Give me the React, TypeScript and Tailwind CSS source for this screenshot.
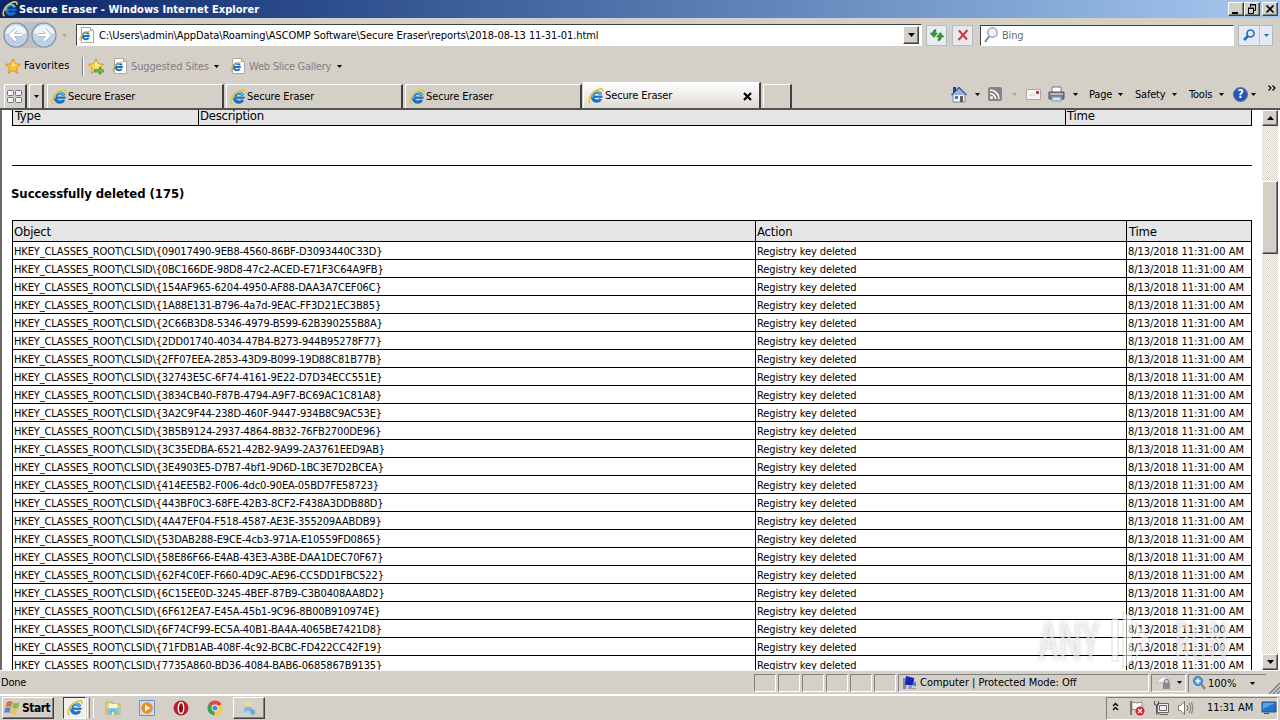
import type { ReactNode } from "react";

const deletedKeys = [
    "09017490-9EB8-4560-86BF-D3093440C33D",
    "0BC166DE-98D8-47c2-ACED-E71F3C64A9FB",
    "154AF965-6204-4950-AF88-DAA3A7CEF06C",
    "1A88E131-B796-4a7d-9EAC-FF3D21EC3B85",
    "2C66B3D8-5346-4979-B599-62B390255B8A",
    "2DD01740-4034-47B4-B273-944B95278F77",
    "2FF07EEA-2853-43D9-B099-19D88C81B77B",
    "32743E5C-6F74-4161-9E22-D7D34ECC551E",
    "3834CB40-F87B-4794-A9F7-BC69AC1C81A8",
    "3A2C9F44-238D-460F-9447-934B8C9AC53E",
    "3B5B9124-2937-4864-8B32-76FB2700DE96",
    "3C35EDBA-6521-42B2-9A99-2A3761EED9AB",
    "3E4903E5-D7B7-4bf1-9D6D-1BC3E7D2BCEA",
    "414EE5B2-F006-4dc0-90EA-05BD7FE58723",
    "443BF0C3-68FE-42B3-8CF2-F438A3DDB88D",
    "4A47EF04-F518-4587-AE3E-355209AABDB9",
    "53DAB288-E9CE-4cb3-971A-E10559FD0865",
    "58E86F66-E4AB-43E3-A3BE-DAA1DEC70F67",
    "62F4C0EF-F660-4D9C-AE96-CC5DD1FBC522",
    "6C15EE0D-3245-4BEF-87B9-C3B0408AA8D2",
    "6F612EA7-E45A-45b1-9C96-8B00B910974E",
    "6F74CF99-EC5A-40B1-BA4A-4065BE7421D8",
    "71FDB1AB-408F-4c92-BCBC-FD422CC42F19",
    "7735A860-BD36-4084-BAB6-0685867B9135",
];

const raised = "border border-t-white border-l-white border-r-[#404040] border-b-[#404040] bg-[#d4d0c8] shadow-[inset_-1px_-1px_0_#808080]";

function IeIcon() {
    return (
        <svg width="16" height="16" viewBox="0 0 16 16" className="shrink-0">
            <path d="M13 6.500A4.600 4.600 0 1 0 12.800 11" fill="none" stroke="#1b72c4" strokeWidth="3.200" />
            <path d="M5 8.700h9.600" stroke="#1b72c4" strokeWidth="2.200" />
            <path d="M12.600 6.200A4.400 4.400 0 0 0 4.400 9.500" fill="none" stroke="#5cc6f7" strokeWidth="1.800" />
            <path d="M2.800 15C-1 14 2 5.500 8.500 2.200 12 .3 15.800 0 14.700 3.800" fill="none" stroke="#edc334" strokeWidth="1.700" />
        </svg>
    );
}

function PageIcon() {
    return (
        <svg width="16" height="16" viewBox="0 0 16 16" className="shrink-0">
            <path d="M2.500.5h9l3 3v12h-12z" fill="#fff" stroke="#a9a9a9" />
            <path d="M11.500.5v3h3" fill="#e2e2e2" stroke="#a9a9a9" />
            <path d="M9.800 7.300A3.300 3.300 0 1 0 9.600 10.800M3.800 9h7" fill="none" stroke="#1b72c4" strokeWidth="2" />
            <path d="M1.500 13.500C-.5 11 4 5.500 11 4" fill="none" stroke="#dfb52f" strokeWidth="1.200" />
        </svg>
    );
}

function Caret({ color = "#000" }: { color?: string }) {
    return (
        <svg width="5" height="3" viewBox="0 0 5 3" className="shrink-0">
            <path d="M0 0h5L2.500 3z" fill={color} />
        </svg>
    );
}

function Star({ small = false }: { small?: boolean }) {
    return (
        <svg width="17" height="17" viewBox="0 0 17 17" className="shrink-0">
            <path d="M8 .8l2.200 5 5.300.500-4 3.700 1.200 5.300L8 12.500l-4.700 2.800 1.200-5.300-4-3.700 5.300-.5z" fill={small ? "#f8dc61" : "#fbc02c"} stroke="#d68f1c" strokeWidth=".9" />
            <path d="M8 3l1.300 3.600 3 .3-5.300 2z" fill="#fff1a0" />
            {small && <path d="M6.500 11.500h5V9l4.700 3.800-4.700 3.700V14h-5z" fill="#63c44c" stroke="#2c8a2c" strokeWidth=".7" />}
        </svg>
    );
}

function ArrowButton({ back = false }: { back?: boolean }) {
    const arrow = back ? "M19 13H8M13 7.500L7.500 13l5.500 5.500" : "M7 13h11M13 7.500l5.500 5.500-5.500 5.500";
    return (
        <svg width="26" height="26" viewBox="0 0 26 26" className="shrink-0">
            <circle cx="13" cy="13" r="12" fill="#c7d3e2" stroke="#8190a3" strokeWidth="1.200" />
            <path d="M2.500 11a10.700 9.500 0 0 1 21 0q-10 4-21 0z" fill="#f1f4f9" />
            <path d="M4 18a10 7 0 0 0 18 0q-9-4-18 0z" fill="#b5d2ea" />
            <path d={arrow} fill="none" stroke="#9eacbd" strokeWidth="4" />
            <path d={arrow} fill="none" stroke="#fff" strokeWidth="2.700" />
        </svg>
    );
}

function TitleBar() {
    return (
        <div className="flex h-[18px] items-center bg-linear-to-r from-[#0a246a] to-[#a6caf0] px-[2px]">
            <IeIcon />
            <span className="ml-px pt-px text-[11px] font-bold tracking-[0.05px] text-white">Secure Eraser - Windows Internet Explorer</span>
            <div className="ml-auto flex h-[14px]">
                <div className={`w-4 ${raised}`}>
                    <svg width="14" height="12"><path d="M3 9h6v2H3z" /></svg>
                </div>
                <div className={`w-4 ${raised}`}>
                    <svg width="14" height="12" fill="none" stroke="#000">
                        <path d="M5 2h6M5.500 2v2M10.500 2v5.500H9M3 5h6M3.500 5v5.500h5V5" />
                        <path d="M5 1.500h6M3 5.500h6" />
                    </svg>
                </div>
                <div className={`ml-[2px] w-4 ${raised}`}>
                    <svg width="14" height="12"><path d="M3.500 2.500l7 7M10.500 2.500l-7 7" stroke="#000" strokeWidth="1.700" /></svg>
                </div>
            </div>
        </div>
    );
}

function AddressBar() {
    return (
        <div className="flex h-[34px] items-center pl-[3px]">
            <div className="flex w-[53px] rounded-full bg-[#bdc0c6]">
                <ArrowButton back />
                <div className="ml-[2px]"><ArrowButton /></div>
            </div>
            <div className="ml-[6px]"><Caret color="#a9a59e" /></div>
            <div className="ml-[9px] flex h-[22px] w-[846px] items-center border border-t-[#404040] border-r-white border-b-white border-l-[#404040] bg-white pl-[2px]">
                <PageIcon />
                <span className="ml-1 pt-[2px] text-[11px] tracking-[-0.075px]">C:\Users\admin\AppData\Roaming\ASCOMP Software\Secure Eraser\reports\2018-08-13 11-31-01.html</span>
                <div className={`ml-auto mr-[2px] flex h-[18px] w-4 items-center justify-center ${raised}`}>
                    <svg width="7" height="4"><path d="M0 0h7L3.500 4z" /></svg>
                </div>
            </div>
            <div className="ml-[4px] flex h-[21px] w-[21px] items-center justify-center border border-[#b3bcc4] bg-[#e6edee]">
                <svg width="16" height="16" viewBox="0 0 16 16">
                    <path d="M7 2.500Q4 2.500 3.500 6H1l3.800 4.500L8.500 6H6q0-1 1-1.500zM9 14q3.500-.5 3.500-4H15l-3.700-4.500L7.500 10H10q0 1.500-1 2z" fill="#36983a" stroke="#207527" strokeWidth=".5" />
                </svg>
            </div>
            <div className="ml-[5px] flex h-[21px] w-[21px] items-center justify-center border border-[#b3bcc4] bg-[#ebe8ec]">
                <svg width="14" height="14"><path d="M3 2.500l8 9M11.500 2L2.500 12" stroke="#cb3740" strokeWidth="2" /></svg>
            </div>
            <div className="ml-[7px] flex h-[21px] w-[254px] items-center border border-t-[#404040] border-r-white border-b-white border-l-[#404040] bg-white pl-[2px]">
                <svg width="17" height="18" viewBox="0 0 17 18" fill="none">
                    <path d="M6.500 10L2 16" stroke="#7e8894" strokeWidth="2" />
                    <circle cx="9.500" cy="6.500" r="4.700" fill="#eaf3fa" stroke="#9eabba" strokeWidth="1.500" />
                </svg>
                <span className="ml-[2px] pt-[2px] text-[11px] tracking-[-0.2px] text-[#6d6d6d]">Bing</span>
            </div>
            <div className="ml-[4px] flex h-[21px] w-[35px] border border-[#aeb9c8] bg-[#e5e9f1]">
                <div className="flex w-[21px] items-center justify-center border-r border-[#b8c2d0]">
                    <svg width="14" height="14" fill="none" stroke="#286bc2"><path d="M6 8L2 12" strokeWidth="2.500" /><circle cx="8.500" cy="5.500" r="3.500" strokeWidth="1.700" /></svg>
                </div>
                <div className="flex flex-1 items-center justify-center"><Caret color="#286bc2" /></div>
            </div>
        </div>
    );
}

function FavoritesBar() {
    return (
        <div className="flex h-[28px] items-center pl-[5px] text-[11px]">
            <Star />
            <span className="ml-[2px] w-[46px] tracking-[0.1px]">Favorites</span>
            <div className="ml-[12px] h-[19px] w-px bg-[#808080]" />
            <div className="h-[19px] w-px bg-white" />
            <div className="ml-[4px]"><Star small /></div>
            <div className="ml-[7px]"><PageIcon /></div>
            <span className="ml-[3px] w-[77px] pt-[2px] tracking-[-0.15px] text-[#808080]">Suggested Sites</span>
            <div className="ml-[6px]"><Caret /></div>
            <div className="ml-[11px]"><PageIcon /></div>
            <span className="ml-[3px] w-[82px] pt-[2px] tracking-[-0.25px] text-[#808080]">Web Slice Gallery</span>
            <div className="ml-[6px]"><Caret /></div>
        </div>
    );
}

function Tab() {
    return (
        <div className="flex h-[24px] w-[177px] items-center border-t border-r-2 border-l border-t-white border-r-[#404040] border-l-white pl-[3px]">
            <IeIcon />
            <span className="ml-px pt-px text-[11px] tracking-[-0.12px]">Secure Eraser</span>
        </div>
    );
}

function MenuButton({ children, width }: { children: ReactNode; width: string }) {
    return (
        <div className={`flex items-center justify-between ${width}`}>
            <span className="pt-px">{children}</span>
            <Caret />
        </div>
    );
}

function TabBar() {
    return (
        <div className="flex h-[30px] items-end border-b-2 border-[#55534f] pl-1">
            <div className="flex h-[24px] w-[23px] items-center justify-center border-t border-r-2 border-l border-t-white border-r-[#404040] border-l-white">
                <svg width="16" height="14" fill="#eef3f8" stroke="#68738a"><rect x=".5" y=".5" width="6" height="5" rx="1" /><rect x="8.500" y=".5" width="6" height="5" rx="1" /><rect x=".5" y="7.500" width="6" height="5" rx="1" /><rect x="8.500" y="7.500" width="6" height="5" rx="1" /></svg>
            </div>
            <div className="ml-[2px] flex h-[24px] w-[15px] items-center justify-center border-t border-r-2 border-l border-t-white border-r-[#404040] border-l-white"><Caret /></div>
            <div className="ml-[3px] flex gap-[2px]">
                <Tab />
                <Tab />
                <Tab />
            </div>
            <div className="ml-px flex h-[26px] w-[178px] items-center border-t border-r-2 border-l border-t-white border-r-[#404040] border-l-white bg-linear-to-b from-white to-[#dedad4] pl-[4px]">
                <IeIcon />
                <span className="ml-px pt-px text-[11px] tracking-[-0.12px]">Secure Eraser</span>
                <svg width="9" height="9" className="mt-[2px] mr-[7px] ml-auto"><path d="M1 1l7 7M8 1L1 8" stroke="#000" strokeWidth="2.200" /></svg>
            </div>
            <div className="ml-[2px] h-[24px] w-[29px] border-t border-r-2 border-l border-t-white border-r-[#404040] border-l-white" />
            <div className="ml-[159px] flex h-[28px] w-[329px] items-center text-[11px] tracking-[-0.2px]">
                <svg width="16" height="17" viewBox="0 0 16 17">
                    <path d="M2 8h12v8H2z" fill="#eef1f6" stroke="#7c8baa" />
                    <path d="M.5 9L8 1.500 15.500 9" fill="#98b5d8" stroke="#41619c" strokeWidth="1.500" />
                    <path d="M2 1h3v4L2 7z" fill="#243b9d" />
                    <path d="M9 10h3v6H9z" fill="#695b56" /><path d="M4 10h3v3H4z" fill="#3d7dc3" />
                </svg>
                <div className="ml-[8px]"><Caret /></div>
                <svg width="14" height="14" viewBox="0 0 14 14" className="ml-[8px]">
                    <rect width="14" height="14" rx="2" fill="#858585" />
                    <circle cx="3.500" cy="10.500" r="1.500" fill="#fff" />
                    <path d="M2 6.500a5.500 5.500 0 0 1 5.500 5.500M2 3a9 9 0 0 1 9 9" fill="none" stroke="#fff" strokeWidth="1.500" />
                </svg>
                <div className="ml-[10px]"><Caret color="#aaa69e" /></div>
                <svg width="15" height="11" viewBox="0 0 15 11" className="ml-[9px]">
                    <path d="M.5.500h14v10H.5z" fill="#f6f5f4" stroke="#aaa8a6" /><path d="M10 2h3v3h-3z" fill="#cf3934" /><path d="M3 6h6" stroke="#ccc" />
                </svg>
                <svg width="17" height="16" viewBox="0 0 17 16" className="ml-[7px]">
                    <path d="M4 6V1h9v5" fill="#fff" stroke="#777" />
                    <path d="M1 6h15v7H1z" fill="#777b82" stroke="#555" /><path d="M2 7h13v2H2z" fill="#b6b9be" />
                    <path d="M4 11h9v4H4z" fill="#cce1f1" stroke="#7e9bb3" />
                </svg>
                <div className="mr-[11px] ml-[8px]"><Caret /></div>
                <MenuButton width="w-[34px]">Page</MenuButton>
                <div className="w-[12px]" />
                <MenuButton width="w-[42px]">Safety</MenuButton>
                <div className="w-[12px]" />
                <MenuButton width="w-[35px]">Tools</MenuButton>
                <div className="ml-[9px] flex h-[15px] w-[15px] items-center justify-center rounded-full border border-[#5e6f9f] bg-[#2854b8] text-[12px] font-bold text-white">?</div>
                <div className="ml-[3px]"><Caret /></div>
                <svg width="8" height="6" className="mb-3 ml-[12px]"><path d="M.5.500L3 3 .5 5.500M4.500.500L7 3 4.500 5.500" fill="none" stroke="#000" strokeWidth="1.200" /></svg>
            </div>
        </div>
    );
}

// Translucent logo over the lower right corner of the page
function Watermark() {
    return (
        <div className="absolute top-[501px] left-[1037px] flex h-[58px] items-center text-[52px] leading-none text-white/60 [font-family:'Open_Sans',sans-serif] [text-shadow:0_0_4px_#00000038]">
            <span className="w-[70px] origin-left scale-x-[0.83]">ANY</span>
            <svg width="44" height="58" viewBox="0 0 44 58" fill="#fff" fillOpacity=".6" stroke="#000" strokeOpacity=".09" strokeWidth="1.500">
                <path d="M3 8h6v42H3zM14 1l9 5v46l-9 5zM27 11l14 18-14 18v-9l7-9-7-9z" />
            </svg>
            <span className="ml-[21px] w-[70px] origin-left scale-x-[0.68]">RUN</span>
        </div>
    );
}

function Scrollbar() {
    return (
        <div className="flex w-4 flex-col bg-[repeating-conic-gradient(#fff_0_25%,#d4d0c8_0_50%)] bg-size-[2px_2px]">
            <div className={`flex h-4 items-center justify-center ${raised}`}>
                <svg width="7" height="4"><path d="M0 4h7L3.500 0z" /></svg>
            </div>
            <div className={`mt-[55px] h-[73px] ${raised}`} />
            <div className={`mt-auto flex h-4 items-center justify-center ${raised}`}>
                <svg width="7" height="4"><path d="M0 0h7L3.500 4z" /></svg>
            </div>
        </div>
    );
}

function Report() {
    return (
        <div className="relative flex h-[560px] overflow-hidden border-l-2 border-[#6a6864] bg-white">
            <div className="w-[1260px] pl-[10px]">
                <div className="grid h-[16px] w-[1240px] grid-cols-[187px_867px_186px] border-r border-b border-black bg-[#e5e5e5] text-[13px] leading-[11px] tracking-[-0.25px]">
                    <div className="border-l border-black pl-[2px]">Type</div>
                    <div className="-ml-px border-l border-black pl-px">Description</div>
                    <div className="-ml-px border-l border-black pl-px">Time</div>
                </div>
                <div className="mt-[39px] h-px w-[1240px] bg-black" />
                <h2 className="mt-[18px] -ml-px h-[20px] text-[13px] leading-[20px] font-bold tracking-[-0.06px]">Successfully deleted (175)</h2>
                <div className="mt-[16px] w-[1240px] border-t border-r border-l border-black">
                    <div className="grid h-[21px] grid-cols-[742px_371px_125px] border-b border-black bg-[#e5e5e5] text-[13px] leading-[21px] tracking-[-0.2px]">
                        <div className="pl-px">Object</div>
                        <div className="border-l border-black pl-px">Action</div>
                        <div className="border-l border-black pl-[2px]">Time</div>
                    </div>
                    {deletedKeys.map((key) => (
                        <div key={key} className="grid h-[18px] grid-cols-[742px_371px_125px] border-b border-black text-[11px] leading-[19px] whitespace-nowrap">
                            <div className="pl-px tracking-[-0.14px]">{`HKEY_CLASSES_ROOT\\CLSID\\{${key}}`}</div>
                            <div className="border-l border-black pl-px tracking-[-0.1px]">Registry key deleted</div>
                            <div className="border-l border-black pl-px tracking-[-0.04px]">8/13/2018 11:31:00 AM</div>
                        </div>
                    ))}
                </div>
            </div>
            <Scrollbar />
            <Watermark />
        </div>
    );
}

function StatusBar() {
    return (
        <div className="flex h-[24px] items-center border-t border-white text-[11px]">
            <span className="w-[754px] shrink-0 pt-px pl-px tracking-[-0.2px]">Done</span>
            {[0, 1, 2, 3, 4, 5].map((pane) => (
                <div key={pane} className="mr-[2px] h-[18px] w-[22px] shrink-0 border border-t-[#808080] border-r-white border-b-white border-l-[#808080]" />
            ))}
            <div className="flex h-[18px] w-[251px] shrink-0 items-center border border-t-[#808080] border-r-white border-b-white border-l-[#808080] pl-[3px]">
                <svg width="15" height="15" viewBox="0 0 15 15">
                    <path d="M1 3h3v11H1z" fill="#848a99" /><path d="M4 1l8 2v7H3z" fill="#1526b5" /><path d="M7 10h3v3h4v1H6z" fill="#8c9ab0" /><path d="M11 6l3 1v4h-3z" fill="#4a84d7" />
                </svg>
                <span className="ml-[3px] pt-px tracking-[-0.03px]">Computer | Protected Mode: Off</span>
            </div>
            <div className="ml-[2px] flex h-[18px] w-[35px] shrink-0 items-center border border-t-[#808080] border-r-white border-b-white border-l-[#808080] pl-[3px]">
                <svg width="17" height="16" viewBox="0 0 17 16">
                    <path d="M1 8l6-6q6-1 7 5z" fill="#f5f5f5" stroke="#bbb" /><path d="M8 8h7v6H8z" fill="#888d95" /><path d="M9.500 8V5.500q2-2 4 0V8" fill="none" stroke="#888d95" strokeWidth="1.500" />
                </svg>
                <div className="ml-[5px]"><Caret /></div>
            </div>
            <div className="ml-[2px] flex h-[18px] w-[78px] shrink-0 items-center border-t border-l border-[#808080] pl-[4px]">
                <svg width="13" height="14" viewBox="0 0 13 14"><path d="M8 8l4 5" stroke="#9b836d" strokeWidth="2.500" /><circle cx="5" cy="5" r="4.500" fill="#5b9ce3" stroke="#3471b8" /><path d="M2.500 5h5M5 2.500v5" stroke="#fff" strokeWidth="1.500" /></svg>
                <span className="ml-[2px] pt-px">100%</span>
                <div className="ml-[14px]"><Caret /></div>
            </div>
            <svg width="12" height="12" className="mt-auto ml-auto shrink-0"><path d="M1 12L12 1M5 12l7-7M9 12l3-3" stroke="#808080" strokeWidth="1.500" /></svg>
        </div>
    );
}

function Taskbar() {
    return (
        <div className="flex h-[26px] items-center border-t-2 border-white pl-[2px] text-[11px]">
            <div className={`flex h-[22px] w-[52px] items-center pl-px ${raised}`}>
                <svg width="17" height="16" viewBox="0 0 17 16">
                    <path d="M3 2q3-2 5.500 0L7 7Q4.500 5.500 1.500 7z" fill="#e36a36" /><path d="M9.500 2.500q3 1.500 6 0L14 8q-3 1-6-.5z" fill="#88b94a" />
                    <path d="M1.200 8q3-1.500 5.500 0L5.300 13Q3 11.500 0 13z" fill="#5189cf" /><path d="M7.700 8.500q3 1.500 6 .3L12 14q-3 1-6-.7z" fill="#f4c340" />
                </svg>
                <span className="ml-px text-[12px] font-bold tracking-[-0.5px]">Start</span>
            </div>
            <div className="ml-[9px] flex h-[22px] w-[23px] items-center justify-center border border-t-[#404040] border-r-white border-b-white border-l-[#404040] bg-[#f1efeb]"><IeIcon /></div>
            <div className="ml-px h-[20px] w-[3px] border-r border-l border-l-white border-r-[#808080]" />
            <div className="ml-px h-[20px] w-[3px] border-r border-white" />
            <svg width="16" height="16" viewBox="0 0 16 16" className="ml-[11px]">
                <path d="M1 2h6l1 2h7v10H1z" fill="#f1d675" stroke="#c8ab56" /><path d="M4 4h8v4H4z" fill="#fff7cc" /><path d="M2 8h12v6H2z" fill="#85c7e5" /><path d="M6 15v-4h4v4" fill="#f8e9a7" stroke="#499bc4" />
            </svg>
            <svg width="16" height="16" viewBox="0 0 16 16" className="ml-[18px]">
                <path d="M.5.500h15v15H.5z" fill="#c7dcf0" stroke="#699ac7" /><circle cx="8" cy="8" r="5.800" fill="#f38c1d" /><path d="M6 4.500L11.500 8 6 11.500z" fill="#fff" />
            </svg>
            <svg width="16" height="16" viewBox="0 0 16 16" className="ml-[18px]">
                <circle cx="8" cy="8" r="7.500" fill="#bd1d27" /><ellipse cx="8" cy="8" rx="2.700" ry="5.500" fill="#8c1118" stroke="#fff" strokeWidth="1.300" />
            </svg>
            <svg width="16" height="16" viewBox="0 0 16 16" className="ml-[18px]">
                <path d="M8 8L1.500 4.200A7.500 7.500 0 0 1 14.500 4.200z" fill="#dc4b3d" /><path d="M8 8L1.500 4.200A7.500 7.500 0 0 0 7.500 15.500z" fill="#38a35a" /><path d="M8 8l6.500-3.800A7.500 7.500 0 0 1 7.500 15.500z" fill="#f6cb42" />
                <circle cx="8" cy="8" r="3.400" fill="#fff" /><circle cx="8" cy="8" r="2.600" fill="#4889dc" />
            </svg>
            <div className={`ml-[10px] flex h-[22px] w-[32px] items-center justify-center ${raised}`}>
                <svg width="16" height="16" viewBox="0 0 16 16"><circle cx="7" cy="4" r="3" fill="#ecd797" /><path d="M3 12V8q4-3 8 0v4z" fill="#88b5dd" /><path d="M0 11h12v2H0z" fill="#acd1ed" /><path d="M10 9l4 1v4l-3 1-2-3z" fill="#72a9bb" /></svg>
            </div>
            <div className="mr-[2px] ml-auto flex h-[23px] w-[172px] items-center border border-t-[#808080] border-r-white border-b-white border-l-[#808080] pl-[5px]">
                <svg width="7" height="9" className="mb-[3px]"><path d="M1 4l2.500-2.500L6 4M1 8l2.500-2.500L6 8" fill="none" stroke="#000" strokeWidth="1.300" /></svg>
                <svg width="17" height="16" viewBox="0 0 17 16" className="ml-[10px]"><path d="M2 1v14" stroke="#777" strokeWidth="2" /><path d="M3 2l5 1 5-1v7L8 10 3 9z" fill="#fff" stroke="#888" /><circle cx="11" cy="11" r="4.500" fill="#d7232d" /><path d="M9 9l4 4M13 9l-4 4" stroke="#fff" strokeWidth="1.400" /></svg>
                <svg width="17" height="16" viewBox="0 0 17 16" className="ml-[7px]" fill="none" stroke="#666"><path d="M4.500 3.500h11v9h-11zM6.500 5.500h7v5h-7zM7 14.500h8" fill="#eee" /><path d="M1.500 1v4h4V1M3.500 5v9h3" stroke="#555" /></svg>
                <svg width="17" height="16" viewBox="0 0 17 16" className="ml-[7px]" fill="none" stroke="#777"><path d="M1.500 5.500h2l4-4v13l-4-4h-2z" fill="#fff" /><path d="M10 5q2 3 0 6M12 3q3.500 5 0 10M14.500 2q3 6 0 12" /></svg>
                <span className="ml-[13px] w-[49px] tracking-[-0.1px] whitespace-nowrap">11:31 AM</span>
                <svg width="16" height="14" viewBox="0 0 16 14" className="ml-[5px]"><path d="M1 1h14v10H1z" fill="#2374ca" stroke="#24548e" /><path d="M2 2h12L2 8z" fill="#58a1e2" /><path d="M3 12h5v1H3z" fill="#354b68" /></svg>
            </div>
        </div>
    );
}

export default function App() {
    return (
        <div className="h-[720px] w-[1280px] overflow-hidden bg-[#d4d0c8] leading-[14px] whitespace-nowrap text-black [font-family:'DejaVu_Sans_Condensed','DejaVu_Sans',sans-serif] [font-stretch:condensed]">
            <TitleBar />
            <AddressBar />
            <FavoritesBar />
            <TabBar />
            <Report />
            <StatusBar />
            <Taskbar />
        </div>
    );
}
